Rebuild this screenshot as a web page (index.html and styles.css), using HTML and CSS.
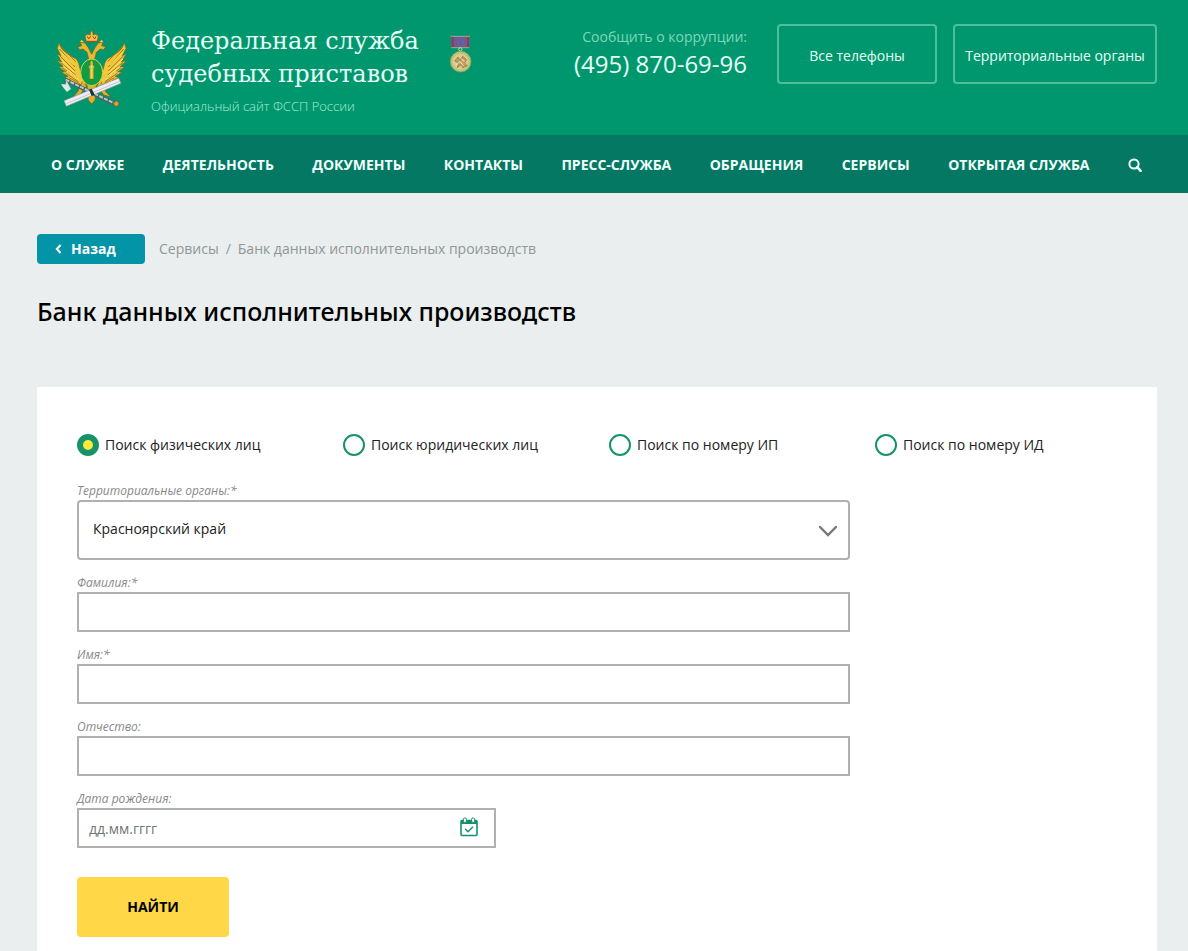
FILE: index.html
```html
<!DOCTYPE html>
<html lang="ru">
<head>
    <meta charset="UTF-8">
    <meta name="viewport" content="width=device-width, initial-scale=1.0">
    <title>Банк данных исполнительных производств</title>

    <link rel="stylesheet" href="styles.css">
</head>
<body>

    <header class="header">
        <div class="container header-inner">
            <a href="#" class="logo" aria-label="ФССП России">
                <svg width="70" height="77" viewBox="50 45 210 231">
                    <!-- wings -->
                    <g id="wing">
                        <path d="M56 84 Q62 104 78 114 L96 126 Q114 130 118 158 L136 210 L108 208 L84 200 L92 196 L74 188 L84 184 L64 172 L76 170 L56 156 L70 155 L51 138 L66 140 L50 118 L62 122 L51 100 Z" fill="#f0c93a" stroke="#8c6a14" stroke-width="2"/>
                        <path d="M58 102 L104 156 M58 122 L104 168 M60 142 L106 180 M66 158 L110 190 M76 174 L114 200 M86 188 L118 206 M60 92 L106 140" fill="none" stroke="#a9751d" stroke-width="3"/>
                        <path d="M62 112 L100 150 M60 132 L102 172 M68 152 L106 184 M80 168 L114 194" fill="none" stroke="#fbe775" stroke-width="3"/>
                    </g>
                    <use href="#wing" transform="translate(308 0) scale(-1 1)"/>
                    <!-- heads -->
                    <path d="M146 136 L140 112 L128 102 L118 104 L112 96 L124 92 L120 82 L134 84 L144 98 L154 118 L164 98 L174 84 L188 82 L184 92 L196 96 L190 104 L180 102 L168 112 L162 136 Z" fill="#e3b935" stroke="#7b5d15" stroke-width="2"/>
                    <path d="M118 82 L124 74 L132 82 Z M176 82 L184 74 L190 82 Z" fill="#f6da58" stroke="#7b5d15"/>
                    <path d="M138 80 L134 62 L142 58 L150 60 L150 54 L154 46 L158 54 L158 60 L166 58 L174 62 L170 80 Z" fill="#f3c44a" stroke="#7b5d15" stroke-width="2"/>
                    <path d="M141 64 L145 72 L151 64 M157 64 L163 72 L167 64 M138 79 H170" fill="none" stroke="#b43b22" stroke-width="3"/>
                    <!-- legs and tail -->
                    <path d="M126 200 L112 230 L98 246 L118 240 L138 214 M182 200 L196 230 L212 246 L190 240 L170 214 M140 206 L144 256 L154 267 L164 256 L168 206 Z" fill="#dfb02f" stroke="#7b5d15" stroke-width="2"/>
                    <!-- shield -->
                    <ellipse cx="154" cy="172" rx="33" ry="40" fill="#109c43" stroke="#e2d14c" stroke-width="3"/>
                    <path d="M148 192 V160 L144 156 L150 150 V142 L154 134 L158 142 V150 L163 156 L160 160 V192 Z" fill="#d9bf3c" stroke="#80691b"/>
                    <path d="M154 150 V190" stroke="#f8ed94" stroke-width="2"/>
                    <!-- axe -->
                    <path d="M74 194 L226 268" stroke="#4d6260" stroke-width="12"/>
                    <path d="M76 194 L226 267" stroke="#bac9c7" stroke-width="6" stroke-dasharray="12 4"/>
                    <path d="M78 196 L92 222 L80 231 Q66 216 62 207 L76 208 Z" fill="#dcebe8" stroke="#6b8582"/>
                    <circle cx="228" cy="266" r="8" fill="#c6a63e" stroke="#5f5527" stroke-width="2"/>
                    <!-- scroll -->
                    <path d="M71 257 L235 189 L242 205 L78 274 Z" fill="#eeedf1" stroke="#8b9194" stroke-width="2"/>
                    <path d="M78 266 L238 199" stroke="#c7c8cd" stroke-width="3"/>
                    <path d="M146 224 L154 221 L163 239 L154 243 Z" fill="#16352c"/>
                </svg>
            </a>
            <div class="site-name">
                <a href="#" class="site-title">Федеральная служба<br>судебных приставов</a>
                <p>Официальный сайт ФССП России</p>
            </div>
            <svg class="medal" width="22" height="39" viewBox="0 0 66 117">
                <rect x="4" y="5" width="54" height="32" fill="#77558f"/>
                <path d="M8 5 V37 M54 5 V37" stroke="#8d3b56" stroke-width="6"/>
                <path d="M24 7 V35 M39 7 V35" stroke="#4e6bae" stroke-width="5"/>
                <path d="M2 4 H60 M4 38 H58" stroke="#a9a97b" stroke-width="3"/>
                <circle cx="31" cy="43" r="5" fill="none" stroke="#d6d39c" stroke-width="3"/>
                <circle cx="32" cy="80" r="31" fill="#bfc277" stroke="#8ba45f" stroke-width="2"/>
                <circle cx="32" cy="80" r="24" fill="#dfcb91"/>
                <path d="M14 78 L24 66 L30 76 L38 64 L50 74 L44 84 L52 92 L38 98 L34 88 L22 98 L26 84 Z" fill="#c3a15d" stroke="#806e3d" stroke-width="2"/>
                <path d="M18 90 L30 80 L40 92 M34 72 L44 80" fill="none" stroke="#f6ecc0" stroke-width="3"/>
            </svg>
            <div class="phone">
                <span>Сообщить о коррупции:</span>
                <a href="tel:+74958706996">(495) 870-69-96</a>
            </div>
            <a href="#" class="header-btn">Все телефоны</a>
            <a href="#" class="header-btn header-btn-wide">Территориальные органы</a>
        </div>
    </header>

    <nav class="nav">
        <div class="container nav-inner">
            <a href="#">О службе</a>
            <a href="#">Деятельность</a>
            <a href="#">Документы</a>
            <a href="#">Контакты</a>
            <a href="#">Пресс-служба</a>
            <a href="#">Обращения</a>
            <a href="#">Сервисы</a>
            <a href="#">Открытая служба</a>
            <button type="button" class="search-btn" aria-label="Поиск">
                <svg width="14" height="14" viewBox="0 0 14 14">
                    <circle cx="6" cy="6" r="4.6" fill="none" stroke="currentColor" stroke-width="2"/>
                    <path d="M9.2 9.2 L12.6 12.8" stroke="currentColor" stroke-width="2.6" stroke-linecap="round"/>
                </svg>
            </button>
        </div>
    </nav>

    <main class="container">
        <div class="breadcrumbs">
            <a href="#" class="back-btn">
                <svg width="7" height="10" viewBox="0 0 7 10">
                    <path d="M5.6 1 L1.8 5 L5.6 9" fill="none" stroke="currentColor" stroke-width="2"/>
                </svg>
                Назад
            </a>
            <a href="#">Сервисы</a>
            <span class="slash">/</span>
            <span>Банк данных исполнительных производств</span>
        </div>

        <h1>Банк данных исполнительных производств</h1>

        <form class="search-form">
            <div class="radios">
                <label><input type="radio" name="searchType" value="fiz" checked>Поиск физических лиц</label>
                <label><input type="radio" name="searchType" value="jur">Поиск юридических лиц</label>
                <label><input type="radio" name="searchType" value="ip">Поиск по номеру ИП</label>
                <label><input type="radio" name="searchType" value="id">Поиск по номеру ИД</label>
            </div>

            <div class="field">
                <label for="region">Территориальные органы:*</label>
                <div class="select-box">
                    <select id="region" name="region">
                        <option>Красноярский край</option>
                    </select>
                    <svg width="20" height="12" viewBox="0 0 20 12">
                        <path d="M2 2 L10 10 L18 2" fill="none" stroke="#777" stroke-width="2.4" stroke-linecap="round"/>
                    </svg>
                </div>
            </div>

            <div class="field">
                <label for="lastName">Фамилия:*</label>
                <input type="text" id="lastName" name="lastName">
            </div>

            <div class="field">
                <label for="firstName">Имя:*</label>
                <input type="text" id="firstName" name="firstName">
            </div>

            <div class="field">
                <label for="patronymic">Отчество:</label>
                <input type="text" id="patronymic" name="patronymic">
            </div>

            <div class="field field-date">
                <label for="birthDate">Дата рождения:</label>
                <div class="date-box">
                    <input type="text" id="birthDate" name="birthDate" placeholder="дд.мм.гггг">
                    <svg width="18" height="20" viewBox="0 0 18 20">
                        <rect x="1" y="3.5" width="16" height="15" rx="1" fill="#fff" stroke="#12916c" stroke-width="1.6"/>
                        <path d="M1 3 H17 V7 H1 Z" fill="#12916c"/>
                        <rect x="3.4" y="1" width="3" height="4.4" rx="1.2" fill="#fff" stroke="#12916c"/>
                        <rect x="11.6" y="1" width="3" height="4.4" rx="1.2" fill="#fff" stroke="#12916c"/>
                        <path d="M5.2 12 L8 14.8 L13 9.8" fill="none" stroke="#12916c" stroke-width="1.4"/>
                    </svg>
                </div>
            </div>

            <button type="submit" class="submit-btn">Найти</button>
        </form>
    </main>

</body>
</html>
```
FILE: styles.css
```css
* {
    box-sizing: border-box;
}

body {
    font-family: "Open Sans", sans-serif;
    font-size: 14px;
    line-height: 20px;
    color: #222;
    background-color: #eaeeee;
    margin: 0;
}

a {
    color: inherit;
    text-decoration: none;
}

.container {
    max-width: 1188px;
    margin: 0 auto;
    padding: 0 31px 0 37px;
}

.header {
    background-color: #01976e;
    color: #e6fff6;
}

.header-inner {
    display: flex;
    align-items: flex-start;
    height: 135px;
    padding-top: 24px;
}

.logo {
    margin: 6px 24px 0 20px;
}

.logo svg {
    display: block;
}

.site-title {
    display: block;
    padding-top: 1px;
    font-family: "Roboto Slab", "DejaVu Serif", serif;
    font-size: 24px;
    line-height: 33px;
    white-space: nowrap;
}

.site-name p {
    margin: 5px 0 0;
    font-size: 13px;
    font-weight: 300;
    color: #a4ecd4;
}

.medal {
    margin: 11px 0 0 31px;
}

.phone {
    margin-left: auto;
    margin-right: 30px;
    padding-top: 3px;
    text-align: right;
    white-space: nowrap;
}

.phone span {
    display: block;
    color: #7fd6b8;
}

.phone a {
    display: block;
    font-size: 24px;
    line-height: 34px;
}

.header-btn {
    width: 160px;
    height: 60px;
    line-height: 60px;
    border: 2px solid #4dbf9f;
    border-radius: 4px;
    text-align: center;
    white-space: nowrap;
}

.header-btn-wide {
    width: 204px;
    margin-left: 16px;
}

.nav {
    background-color: #047863;
    color: #f0fffb;
}

.nav-inner {
    display: flex;
    justify-content: space-between;
    align-items: center;
    height: 58px;
    padding: 2px 46px 0 51px;
    font-weight: bold;
    text-transform: uppercase;
    white-space: nowrap;
}

.search-btn {
    padding: 0;
    border: none;
    background: none;
    color: inherit;
    line-height: 0;
    cursor: pointer;
}

.breadcrumbs {
    display: flex;
    align-items: center;
    padding-top: 41px;
    color: #909696;
}

.back-btn {
    display: flex;
    align-items: center;
    gap: 9px;
    width: 108px;
    height: 30px;
    margin-right: 14px;
    padding-left: 18px;
    border-radius: 4px;
    background-color: #0494a8;
    color: #fff;
    font-weight: bold;
}

.slash {
    margin: 0 7px;
}

h1 {
    margin: 30px 0 59px;
    font-family: "Noto Sans", "Open Sans", sans-serif;
    font-size: 25px;
    font-weight: 500;
    line-height: 34px;
    color: #000;
}

.search-form {
    padding: 46px 40px 40px;
    background-color: #fff;
}

.radios {
    display: grid;
    grid-template-columns: repeat(4, 1fr);
    gap: 24px;
    margin-bottom: 24px;
}

.radios label {
    display: flex;
    align-items: center;
    gap: 6px;
    height: 24px;
}

.radios input {
    appearance: none;
    width: 22px;
    height: 22px;
    margin: 0;
    border: 2px solid #17936b;
    border-radius: 50%;
    background-color: #fff;
}

.radios input:checked {
    border-width: 6px;
    background-color: #ffe93b;
}

.field {
    width: calc(75% - 7px);
    margin-bottom: 13px;
}

.field label {
    display: block;
    font-size: 12px;
    font-style: italic;
    line-height: 19px;
    color: #888;
}

.field input,
.field select {
    display: block;
    width: 100%;
    height: 40px;
    padding: 0 10px;
    border: 2px solid #b0b0b0;
    border-radius: 0;
    background-color: #fff;
    color: #222;
    font-family: inherit;
    font-size: 14px;
}

.field select {
    appearance: none;
    height: 60px;
    padding: 0 14px 4px;
    border-radius: 4px;
}

.field input::placeholder {
    color: #757575;
}

.field-date {
    width: 419px;
    max-width: 100%;
}

.select-box,
.date-box {
    position: relative;
}

.select-box svg {
    position: absolute;
    right: 12px;
    top: 25px;
    pointer-events: none;
}

.date-box svg {
    position: absolute;
    right: 18px;
    top: 9px;
}

.submit-btn {
    width: 152px;
    height: 60px;
    margin-top: 16px;
    padding: 0 0 2px;
    border: none;
    border-radius: 4px;
    background-color: #ffd747;
    color: #000;
    font-family: inherit;
    font-size: 14px;
    font-weight: bold;
    text-transform: uppercase;
    cursor: pointer;
}
```
